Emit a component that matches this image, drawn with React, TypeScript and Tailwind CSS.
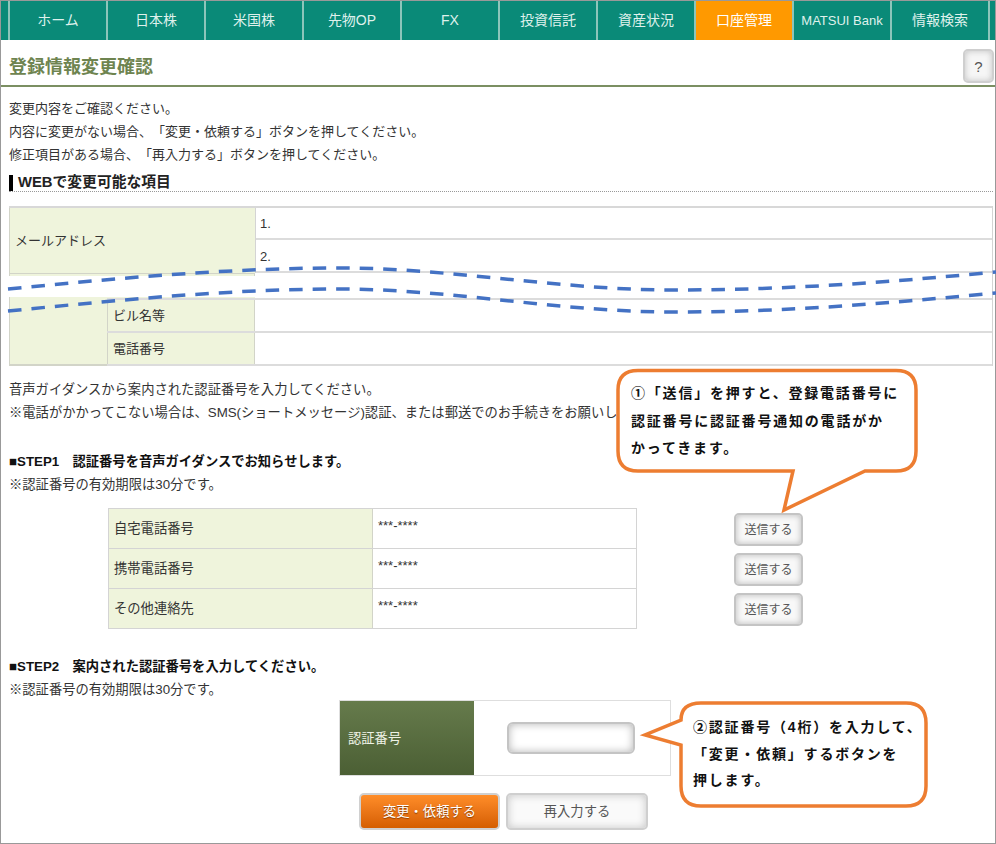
const navItems = ["ホーム", "日本株", "米国株", "先物OP", "FX", "投資信託", "資産状況", "口座管理", "MATSUI Bank", "情報検索"];
const phoneRows = ["自宅電話番号", "携帯電話番号", "その他連絡先"];

const SendButton = () => (
  <button className="h-[33px] w-[69px] rounded-[5px] border-2 border-[#c4c4c4] bg-[#f8f8f8] pt-[1px] text-[12px] text-[#555] shadow-[inset_0_0_6px_#b8b8b8]">
    送信する
  </button>
);

const TableRow = ({ label }: { label: string }) => (
  <div className="flex h-[33px] border-b-2 border-[#dcdcdc]">
    <div className="flex w-[148px] items-center border-x border-[#d2d4c8] bg-[#eff4dc] px-[5px]">{label}</div>
    <div className="flex-1" />
  </div>
);

const Dashes = ({ d }: { d: string }) => (
  <path d={d} fill="none" stroke="#4472c4" strokeWidth="3.5" strokeDasharray="13.5 10" />
);

export default function App() {
  return (
    <div className="relative h-[844px] w-[996px] overflow-hidden bg-white font-['Liberation_Sans','Noto_Sans_CJK_JP',sans-serif] text-[13px] leading-[23px] text-[#333] [text-spacing-trim:space-all]">
      <div className="h-full w-full border border-[#999]">
        {/* global nav */}
        <div className="flex h-[39px] bg-[#0a8a78] text-[14px] text-[#dff1ec]">
          <div className="w-[7px]" />
          {navItems.map((item) => (
            <div
              key={item}
              className={`flex w-[98px] items-center justify-center whitespace-nowrap border-l-2 border-[#8cc5ba] ${item === "口座管理" ? "bg-[#ff9900] text-white" : ""} ${item === "MATSUI Bank" ? "text-[13px]" : ""}`}
            >
              {item}
            </div>
          ))}
          <div className="flex-1 border-l-2 border-[#8cc5ba]" />
        </div>

        <div className="flex h-[47px] items-end justify-between border-b-2 border-[#7b8f62] pb-[2px] pl-[8px] pr-[1px]">
          <h1 className="mb-[5px] text-[18px] font-bold leading-[22px] text-[#6e8450]">登録情報変更確認</h1>
          <button className="h-[34px] w-[31px] rounded-[5px] border-2 border-[#cfcfcf] bg-[#f6f6f6] text-[15px] text-[#555] shadow-[inset_0_0_6px_#c0c0c0]">
            ?
          </button>
        </div>

        <div className="pl-[8px] pr-[2px]">
          <div className="pt-[10px]">
            <p>変更内容をご確認ください。</p>
            <p>内容に変更がない場合、「変更・依頼する」ボタンを押してください。</p>
            <p>修正項目がある場合、「再入力する」ボタンを押してください。</p>
          </div>

          <div className="mt-[7px] flex h-[19px] items-start gap-[5px] border-b border-dotted border-[#999]">
            <span className="mt-[2px] h-[16px] w-[4px] bg-black" />
            <h2 className="text-[14.8px] font-bold leading-[18px] text-[#222]">WEBで変更可能な項目</h2>
          </div>

          {/* registration table, torn in the middle */}
          <div className="mt-[14px] border-r border-[#d4d4d4] text-[#333]">
            <div className="flex border-t-2 border-[#d8d8d8]">
              <div className="flex w-[246px] items-center border-l border-[#d2d4c8] bg-[#eff4dc] px-[5px]">メールアドレス</div>
              <div className="flex-1 border-l border-[#d4d4d4]">
                <div className="flex h-[32px] items-center border-b-2 border-[#dcdcdc] px-[4px] pt-[1px]">1.</div>
                <div className="flex h-[33px] items-center border-b-2 border-[#dcdcdc] px-[4px] pt-[2px]">2.</div>
              </div>
            </div>
            <div className="flex h-[3px]">
              <div className="w-[246px] border-x border-t border-[#d2d4c8] bg-[#eff4dc]" />
            </div>
            <div className="h-[21px] border-r border-white" />
            <div className="flex">
              <div className="w-[98px] border-b-2 border-l border-[#d2d4c8] bg-[#eff4dc]" />
              <div className="flex-1">
                <div className="flex h-[3px] border-b-2 border-[#dcdcdc]">
                  <div className="w-[148px] bg-[#eff4dc]" />
                </div>
                <TableRow label="ビル名等" />
                <TableRow label="電話番号" />
              </div>
            </div>
          </div>

          <div className="text-[13.3px]">
            <div className="mt-[12px] whitespace-nowrap">
              <p>音声ガイダンスから案内された認証番号を入力してください。</p>
              <p>※電話がかかってこない場合は、SMS(ショートメッセージ)認証、または郵送でのお手続きをお願いします。</p>
            </div>

            <div className="mt-[26px]">
              <p className="font-bold text-[#111]">■STEP1　認証番号を音声ガイダンスでお知らせします。</p>
              <p>※認証番号の有効期限は30分です。</p>
            </div>

            <div className="mt-[12px] flex">
              <div className="ml-[99px] flex h-[121px] w-[529px] flex-col border border-[#d4d4d4]">
                {phoneRows.map((row, i) => (
                  <div key={row} className={`flex flex-1 ${i > 0 ? "border-t border-[#d4d4d4]" : ""}`}>
                    <div className="flex w-[264px] items-center border-r border-[#d2d4c8] bg-[#eff4dc] px-[5px]">{row}</div>
                    <div className="px-[5px] pt-[5px] text-[13px]">***-****</div>
                  </div>
                ))}
              </div>
              <div className="ml-[97px] flex flex-col gap-[7px] pt-[5px]">
                <SendButton />
                <SendButton />
                <SendButton />
              </div>
            </div>

            <div className="mt-[26px] h-[45px]">
              <p className="font-bold text-[#111]">■STEP2　案内された認証番号を入力してください。</p>
              <p>※認証番号の有効期限は30分です。</p>
            </div>

            <div className="ml-[330px] flex h-[76px] w-[332px] border border-[#dedede]">
              <div className="flex w-[134px] items-center bg-gradient-to-b from-[#667b4c] to-[#4b5f34] px-[8px] text-[#eef2e6]">認証番号</div>
              <div className="flex flex-1 items-center pl-[33px]">
                <div className="h-[32px] w-[128px] rounded-[6px] border-2 border-[#c4c4c4] bg-white shadow-[inset_0_0_9px_#b4b4b4]" />
              </div>
            </div>

            <div className="ml-[350px] mt-[17px] flex gap-[6px]">
              <button className="h-[37px] w-[141px] rounded-[5px] border-2 border-[#d0d0d0] bg-gradient-to-b from-[#ff8d28] to-[#d55e00] text-white [text-shadow:0_1px_1px_#8a3d00]">
                変更・依頼する
              </button>
              <button className="h-[37px] w-[142px] rounded-[5px] border-2 border-[#cfcfcf] bg-[#fafafa] text-[#555] shadow-[inset_0_0_8px_#c4c4c4]">
                再入力する
              </button>
            </div>
          </div>
        </div>
      </div>

      {/* annotations drawn over the page */}
      <svg className="absolute left-0 top-0" width="996" height="844" viewBox="0 0 996 844">
        <Dashes d="M8 289 C120 278 230 268 340 268 C450 268 560 290 673 290 C790 290 890 282 996 272" />
        <Dashes d="M8 311 C120 300 230 289 340 289 C450 289 560 312 673 312 C790 312 890 303 996 293" />
        <path
          d="M638 370.5 H896 Q916 370.5 916 390 V451 Q916 471 896 471 H865 L784 510 L793 471 H638 Q618 471 618 451 V390 Q618 370.5 638 370.5 Z"
          fill="white"
          stroke="#ed7d31"
          strokeWidth="3.5"
        />
        <path
          d="M701 703 H906 Q926 703 926 723 V786 Q926 806 906 806 H701 Q681 806 681 786 V745 L645 735 L681 720 Q681 703 701 703 Z"
          fill="white"
          stroke="#ed7d31"
          strokeWidth="3.5"
        />
      </svg>
      <div className="absolute left-[631px] top-[380px] whitespace-nowrap text-[14px] font-semibold leading-[27.5px] tracking-[1.8px] text-[#111]">
        <div>①「送信」を押すと、登録電話番号に</div>
        <div>認証番号に認証番号通知の電話がか</div>
        <div>かってきます。</div>
      </div>
      <div className="absolute left-[693px] top-[714px] whitespace-nowrap text-[14px] font-semibold leading-[26.5px] tracking-[1.8px] text-[#111]">
        <div>②認証番号（4桁）を入力して、</div>
        <div>「変更・依頼」するボタンを</div>
        <div>押します。</div>
      </div>
    </div>
  );
}
